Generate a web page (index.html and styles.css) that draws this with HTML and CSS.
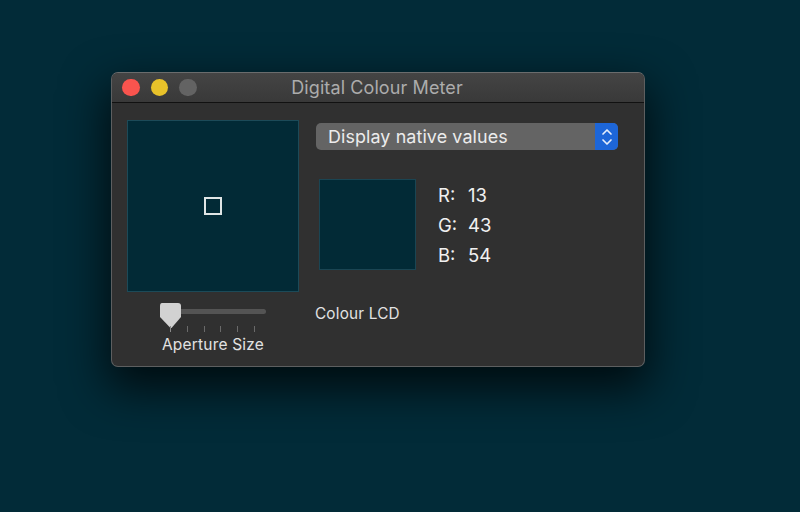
FILE: index.html
```html
<!DOCTYPE html>
<html lang="en">
<head>
<meta charset="utf-8">
<title>Digital Colour Meter</title>
<link rel="stylesheet" href="styles.css">
</head>
<body>
<div class="desktop">
  <div class="window">
    <header class="titlebar">
      <div class="lights">
        <span class="light red"></span>
        <span class="light yellow"></span>
        <span class="light grey"></span>
      </div>
      <div class="title">Digital Colour Meter</div>
    </header>
    <main class="content">
      <section class="left">
        <div class="well"><span class="aperture"></span></div>
        <div class="slider">
          <div class="track"></div>
          <svg class="thumb" width="24" height="28" viewBox="0 0 24 28"><path d="M3 0H19Q22 0 22 3V14L12.500 25H11.500L1 14V3Q1 0 3 0Z" fill="#d2d2d2"/></svg>
          <div class="ticks"><i class="tick first"></i><i class="tick"></i><i class="tick"></i><i class="tick"></i><i class="tick"></i><i class="tick"></i></div>
        </div>
        <div class="caption">Aperture Size</div>
      </section>
      <section class="right">
        <div class="select">
          <span class="select-label">Display native values</span>
          <span class="stepper">
            <svg width="12" height="20" viewBox="0 0 12 20" fill="none" stroke="#e4edfb" stroke-width="1.700" stroke-linecap="round" stroke-linejoin="round"><path d="M2 7L6 3L10 7M2 13L6 17L10 13"/></svg>
          </span>
        </div>
        <div class="reading">
          <div class="swatch"></div>
          <dl class="values">
            <div class="row"><dt>R:</dt><dd>13</dd></div>
            <div class="row"><dt>G:</dt><dd>43</dd></div>
            <div class="row"><dt>B:</dt><dd>54</dd></div>
          </dl>
        </div>
        <div class="display-name">Colour LCD</div>
      </section>
    </main>
  </div>
</div>
</body>
</html>
```
FILE: styles.css
```css
* { box-sizing: border-box; }
html, body { margin: 0; height: 100%; }
body { font-family: Inter, "Noto Sans", sans-serif; overflow: hidden; background: #022b38; }
.desktop {
  width: 800px; height: 512px; padding: 72px 0 0 111px;
  background: #022b38;
}
.window {
  width: 534px; height: 295px; border-radius: 7px;
  background: #303030; overflow: hidden;
  border: 1px solid #5d5f60; border-top-color: #6a6c6d;
  box-shadow: 0 18px 45px 4px rgba(0,0,0,.72);
  display: flex; flex-direction: column;
}
.titlebar {
  height: 30px; flex: none; display: flex; align-items: center; position: relative;
  background: linear-gradient(#444, #393939);
  border-bottom: 1px solid #111;
  padding-left: 10px;
}
.lights { display: flex; gap: 11px; }
.light { width: 17.500px; height: 17.500px; border-radius: 50%; }
.red { background: #f9544e; }
.yellow { background: #e8c22a; }
.grey { background: #636363; }
.title {
  position: absolute; left: 0; right: 2px; top: 0; bottom: 0;
  display: flex; align-items: center; justify-content: center;
  color: #acacac; font-size: 18px; letter-spacing: .1px;
}
.content { flex: 1; display: flex; padding: 17px 0 0 15px; }
.left { width: 172px; flex: none; display: flex; flex-direction: column; align-items: center; }
.well {
  width: 172px; height: 172px; background: #022a36;
  border: 1px solid #1c4a58;
  display: flex; align-items: center; justify-content: center;
}
.aperture { width: 18px; height: 18px; border: 2px solid #dfe5e5; }
.slider { width: 172px; height: 42px; margin-top: 11px; position: relative; }
.track { position: absolute; left: 33px; top: 6px; width: 106px; height: 5px; border-radius: 3px; background: #545454; }
.thumb { position: absolute; left: 32px; top: 0; }
.ticks { position: absolute; left: 43px; top: 23px; width: 85px; display: flex; justify-content: space-between; }
.tick { width: 1px; height: 6px; background: #6a6a6a; }
.tick.first { background: #8a8a8a; }
.caption { margin-top: -10px; color: #e2e2e2; font-size: 15.500px; letter-spacing: .2px; line-height: 20px; }
.right { margin-left: 17px; width: 302px; flex: none; display: flex; flex-direction: column; }
.select {
  margin-top: 3px; height: 27px; width: 302px; border-radius: 5px; overflow: hidden;
  background: #646464; display: flex; justify-content: space-between; align-items: center;
}
.select-label { padding-left: 12px; color: #ececec; font-size: 17.900px; letter-spacing: .1px; }
.stepper { width: 23px; height: 27px; background: #1d66d8; display: flex; align-items: center; justify-content: center; }
.reading { margin-top: 29px; margin-left: 3px; display: flex; }
.swatch { width: 97px; height: 91px; background: #022a36; border: 1px solid #1a4553; }
.values { margin: 1px 0 0 22px; }
.row { display: flex; height: 30px; align-items: center; color: #f0f0f0; font-size: 18.500px; font-weight: 400; }
.row dt { width: 17px; text-align: right; }
.row dd { margin: 0 0 0 13px; }
.display-name { margin-top: 33px; margin-left: -1px; color: #e2e2e2; font-size: 15.300px; letter-spacing: .2px; line-height: 22px; }
```
